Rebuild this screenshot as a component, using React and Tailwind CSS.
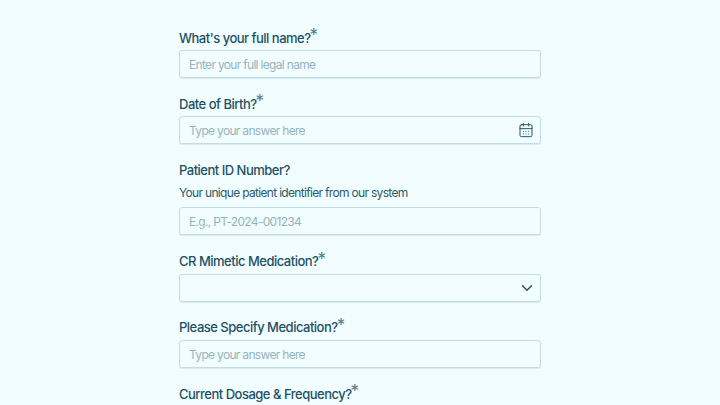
import { CalendarDays, ChevronDown } from "lucide-react";

const Label = ({ text, required }) => (
  <label className="flex h-5 items-center pt-px text-[13px] font-medium leading-5 tracking-[-0.5px] text-[#1d5164]">
    {text}
    {required && (
      <span className="relative -top-[2px] -ml-px text-[17px] font-normal leading-none text-[#4f7c89]">*</span>
    )}
  </label>
);

const Field = ({ label, required, hint, placeholder, icon }) => (
  <div className="flex flex-col">
    <Label text={label} required={required} />
    {hint && <p className="mt-[3px] h-[18px] pt-px text-[12px] leading-[18px] tracking-[-0.68px] text-[#2b5c6b]">{hint}</p>}
    <div className={`relative h-7 ${hint ? "mt-[6.4px]" : "mt-[3px]"}`}>
      <input
        type="text"
        placeholder={placeholder}
        readOnly
        className="h-full w-full rounded-[3px] border border-[#c0dfe5] bg-[#f2fdff] px-[9px] pt-px text-[12px] tracking-[-0.68px] text-[#1d4f60] shadow-[0_1px_1px_rgba(29,79,96,0.12)] outline-none placeholder:text-[#95b5bd]"
      />
      {icon}
    </div>
  </div>
);

export default function App() {
  return (
    <div className="h-screen overflow-hidden bg-[#f2fdff] font-['Inter',sans-serif]">
      <div className="mx-auto flex w-[362px] flex-col gap-[15.4px] pt-[27px]">
        <Field label="What's your full name?" required placeholder="Enter your full legal name" />
        <Field
          label="Date of Birth?"
          required
          placeholder="Type your answer here"
          icon={<CalendarDays size={16} strokeWidth={1.5} className="absolute right-[7px] top-[6px] text-[#1f5a6c]" />}
        />
        <Field
          label="Patient ID Number?"
          hint="Your unique patient identifier from our system"
          placeholder="E.g., PT-2024-001234"
        />
        <Field
          label="CR Mimetic Medication?"
          required
          icon={<ChevronDown size={18} strokeWidth={2} className="absolute right-[5px] top-[5px] text-[#1f5a6c]" />}
        />
        <Field label="Please Specify Medication?" required placeholder="Type your answer here" />
        <Field label="Current Dosage & Frequency?" required placeholder="Type your answer here" />
      </div>
    </div>
  );
}
